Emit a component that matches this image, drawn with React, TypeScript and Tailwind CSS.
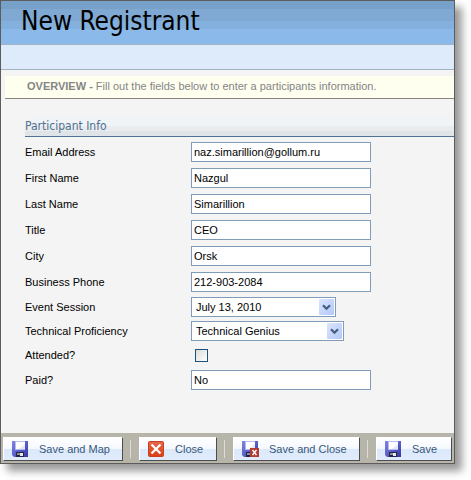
import React from "react";

const textFields = [
  { id: "email", label: "Email Address", value: "naz.simarillion@gollum.ru" },
  { id: "first-name", label: "First Name", value: "Nazgul" },
  { id: "last-name", label: "Last Name", value: "Simarillion" },
  { id: "title", label: "Title", value: "CEO" },
  { id: "city", label: "City", value: "Orsk" },
  { id: "phone", label: "Business Phone", value: "212-903-2084" },
];

const DiskIcon = ({ withClose = false }: { withClose?: boolean }) => (
  <svg width="17" height="16" viewBox="0 0 17 16" className="shrink-0" aria-hidden="true">
    <defs>
      <linearGradient id="disk" x1="0" y1="0" x2="1" y2="1">
        <stop offset="0" stopColor="#8386e2" />
        <stop offset="0.5" stopColor="#5a5fcb" />
        <stop offset="1" stopColor="#34369c" />
      </linearGradient>
    </defs>
    <path d="M0 0h16v16H2l-2-2z" fill="url(#disk)" />
    <path d="M3 0h10v9H3z" fill="#b9bdea" />
    <path d="M4 1h9v7H4z" fill="#fff" />
    <path d="M7 8h6V3z" fill="#e3e8f6" />
    <path d="M4 11h8v5H4z" fill="#23243f" />
    <path d="M5 12h3v2H5z" fill="#8a8f9c" />
    <path d="M8 12h3v3H8z" fill="#e8e8ea" />
    {withClose && (
      <>
        <path d="M8 7h9v9H8z" fill="#b43a34" />
        <path d="M10.5 9l4 5M14.5 9l-4 5" stroke="#fff" strokeWidth="1.4" />
      </>
    )}
  </svg>
);

const CloseIcon = () => (
  <svg width="17" height="16" viewBox="0 0 17 16" className="shrink-0" aria-hidden="true">
    <defs>
      <linearGradient id="close" x1="0" y1="0" x2="0" y2="1">
        <stop offset="0" stopColor="#e4694c" />
        <stop offset="1" stopColor="#dc3f12" />
      </linearGradient>
    </defs>
    <rect x="0.5" y="0.5" width="15" height="15" rx="1" fill="url(#close)" stroke="#c8401f" />
    <path d="M3.5 3.5l9 9M12.5 3.5l-9 9" stroke="#fff" strokeWidth="2.2" />
  </svg>
);

const Field = ({ id, label, value }: { id: string; label: string; value: string }) => (
  <div className="flex h-[26px] items-center">
    <label htmlFor={id} className="w-[166px] shrink-0">
      {label}
    </label>
    <input
      id={id}
      type="text"
      defaultValue={value}
      className="h-5 w-[180px] border border-[#7f9db9] bg-white px-[2px] outline-none"
    />
  </div>
);

const SelectField = ({
  id,
  label,
  value,
  className,
}: {
  id: string;
  label: string;
  value: string;
  className: string;
}) => (
  <div className="flex h-6 items-center">
    <label htmlFor={id} className="w-[166px] shrink-0">
      {label}
    </label>
    <div className={`relative ${className}`}>
      <select
        id={id}
        className="block h-5 w-full appearance-none border border-[#7f9db9] bg-white pl-1 pr-5 outline-none"
      >
        <option>{value}</option>
      </select>
      <span className="pointer-events-none absolute right-[2px] top-[2px] flex h-4 w-[15px] items-center justify-center rounded-[1px] bg-linear-to-br from-[#dbe5fd] to-[#b3c7f8]">
        <svg width="9" height="7" viewBox="0 0 9 7" aria-hidden="true">
          <path d="M1 1.2l3.5 3.5L8 1.2" fill="none" stroke="#45607f" strokeWidth="2.2" />
        </svg>
      </span>
    </div>
  </div>
);

const ToolButton = ({
  className,
  icon,
  children,
}: {
  className: string;
  icon: React.ReactNode;
  children: React.ReactNode;
}) => (
  <button
    type="button"
    className={`flex h-6 shrink-0 items-center gap-[10px] whitespace-nowrap border border-b-[#4c4c4c] border-l-white border-r-[#4c4c4c] border-t-white bg-[linear-gradient(#fff_0,#f4f8fe_11px,#dce9fa_11px,#e0ecfc_100%)] pl-2 text-[#38587a] ${className}`}
  >
    {icon}
    {children}
  </button>
);

const Divider = () => <span className="h-[18px] w-[2px] shrink-0 border-l border-[#dedcd6]" />;

const App = () => {
  return (
    <div className="min-h-screen bg-white pb-4 pr-4 font-['Liberation_Sans',Arial,sans-serif] text-[11px] leading-4 text-black">
      <div className="border border-[#5c5c5c] bg-[#f4f4f4] shadow-[7px_7px_8px_#999]">
        <header>
          <div className="h-11 border-b border-[#a0b4c4] bg-[linear-gradient(#78a1ca_8px,#7fa9d3_8px,#7fa9d3_20px,#84b0de_20px,#84b0de_28px,#8bb9ea_28px)] pl-5">
            <h1 className="font-['DejaVu_Sans_Condensed','DejaVu_Sans',sans-serif] text-[26px] leading-10">
              New Registrant
            </h1>
          </div>
          <div className="h-[25px] border-b border-[#a0b4c4] bg-[#deebfb]" />
        </header>

        <p className="ml-1 mt-[6px] border-b border-[#8a8580] bg-[#fffff0] pb-1 pl-[22px] pt-[2px] text-[#858585]">
          <b>OVERVIEW -</b> Fill out the fields below to enter a participants information.
        </p>

        <form className="pl-6">
          <h2 className="mt-[18px] border-b border-[#4f7396] bg-[linear-gradient(#f0f4f7_9px,#e9ebed_9px,#e9ebed_14px,#dfe4e9_14px)] font-['DejaVu_Sans_Condensed','DejaVu_Sans',sans-serif] text-[12px] leading-[19px] text-[#4f7091]">
            Participant Info
          </h2>
          <div className="pb-10 pt-[2px]">
            {textFields.map((field) => (
              <Field key={field.id} {...field} />
            ))}
            <SelectField id="session" label="Event Session" value="July 13, 2010" className="w-[145px]" />
            <SelectField
              id="proficiency"
              label="Technical Proficiency"
              value="Technical Genius"
              className="w-[153px]"
            />
            <div className="flex h-6 items-center">
              <label htmlFor="attended" className="w-[170px] shrink-0">
                Attended?
              </label>
              <input
                id="attended"
                type="checkbox"
                className="size-[13px] appearance-none border border-[#1c5180] bg-linear-to-br from-[#dcdcd7] to-white"
              />
            </div>
            <Field id="paid" label="Paid?" value="No" />
          </div>
        </form>

        <footer className="flex items-center gap-[7px] bg-[#b7b4aa] px-[2px] pb-[2px] pt-1">
          <ToolButton className="w-[120px]" icon={<DiskIcon />}>
            Save and Map
          </ToolButton>
          <Divider />
          <ToolButton className="w-[78px]" icon={<CloseIcon />}>
            Close
          </ToolButton>
          <Divider />
          <ToolButton className="w-[127px]" icon={<DiskIcon withClose />}>
            Save and Close
          </ToolButton>
          <Divider />
          <ToolButton className="w-[76px]" icon={<DiskIcon />}>
            Save
          </ToolButton>
        </footer>
      </div>
    </div>
  );
};

export default App;
